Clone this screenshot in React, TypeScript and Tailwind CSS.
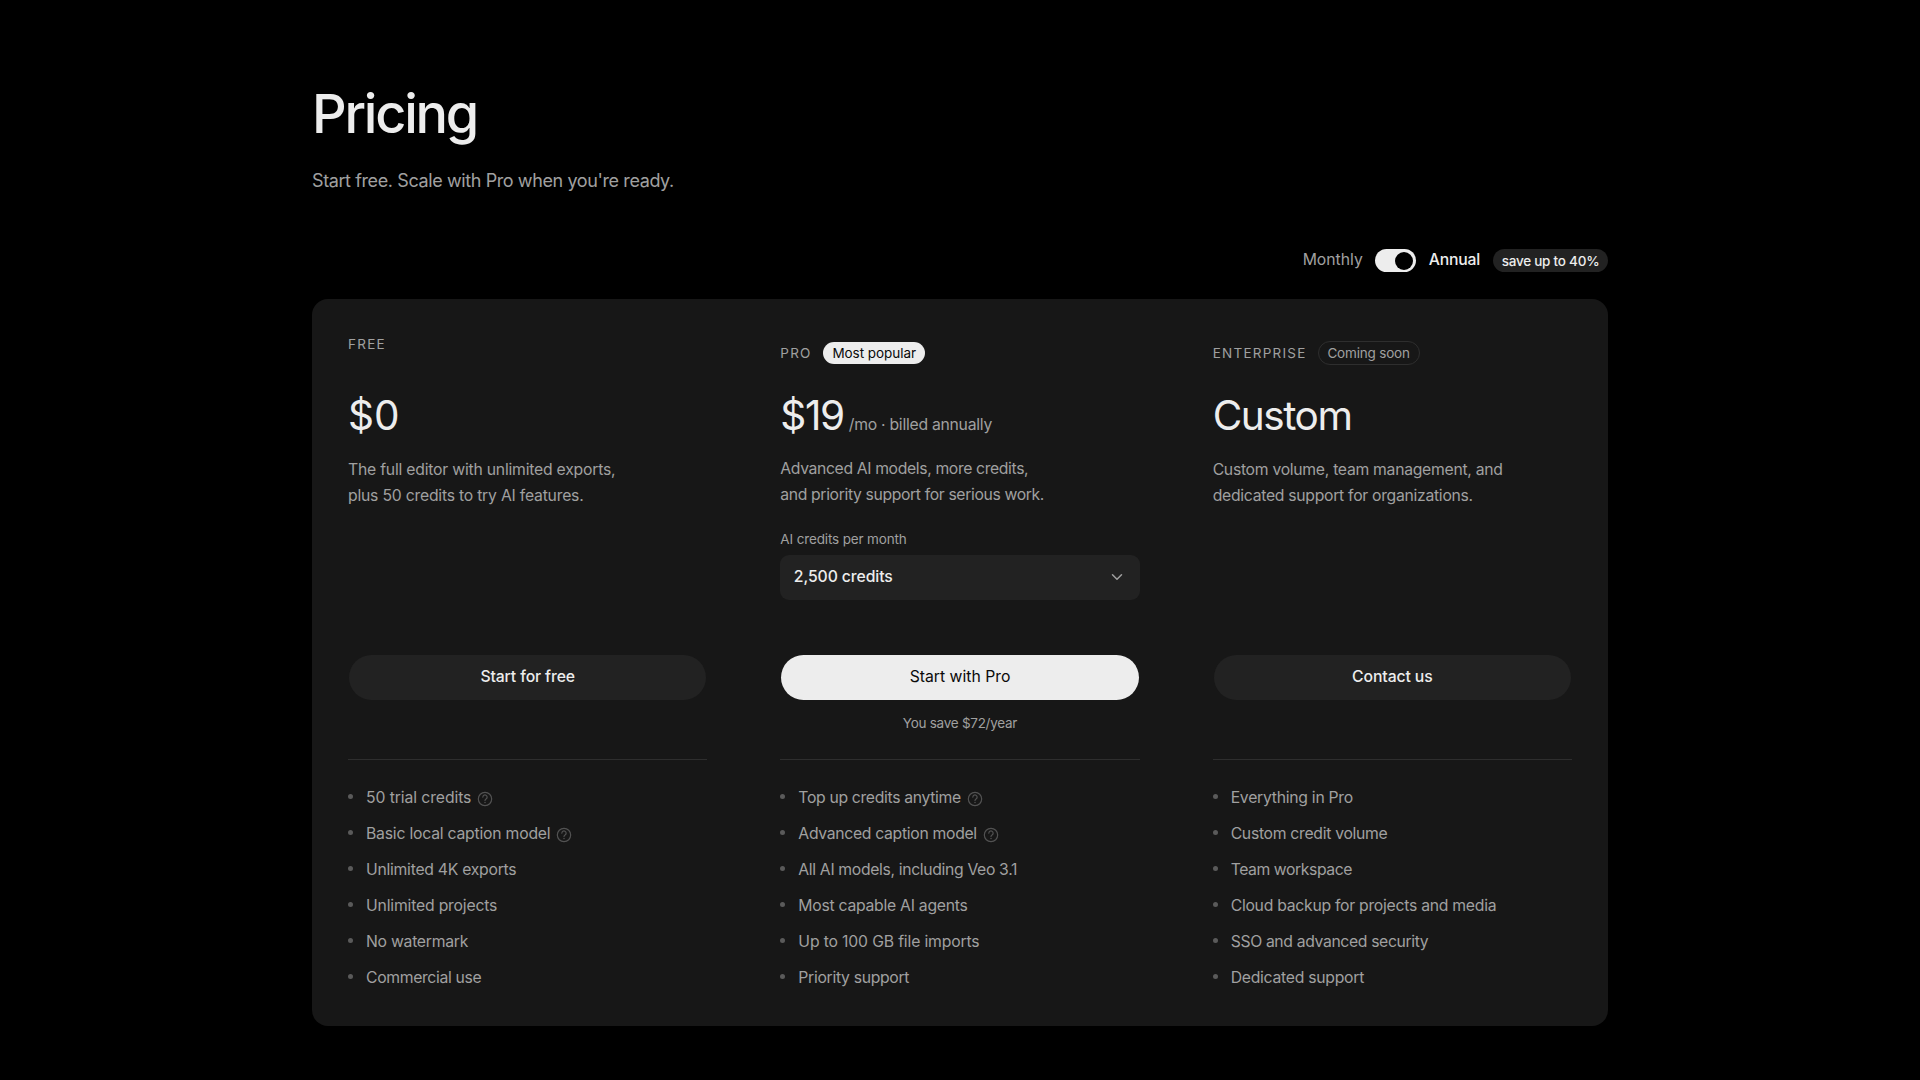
import { ChevronDown } from "lucide-react";
import { clsx } from "clsx";
import { useState } from "react";

interface Feature {
  label: string;
  tracking?: string;
  hasHelp?: boolean;
}

const freeFeatures: Feature[] = [
  { label: "50 trial credits", tracking: "tracking-[-0.006em]", hasHelp: true },
  { label: "Basic local caption model", tracking: "tracking-[-0.014em]", hasHelp: true },
  { label: "Unlimited 4K exports" },
  { label: "Unlimited projects", tracking: "tracking-[-0.012em]" },
  { label: "No watermark" },
  { label: "Commercial use", tracking: "tracking-[-0.022em]" },
];

const proFeatures: Feature[] = [
  { label: "Top up credits anytime", tracking: "tracking-[-0.021em]", hasHelp: true },
  { label: "Advanced caption model", tracking: "tracking-[-0.02em]", hasHelp: true },
  { label: "All AI models, including Veo 3.1", tracking: "tracking-[-0.022em]" },
  { label: "Most capable AI agents" },
  { label: "Up to 100 GB file imports", tracking: "tracking-[-0.01em]" },
  { label: "Priority support", tracking: "tracking-[-0.02em]" },
];

const enterpriseFeatures: Feature[] = [
  { label: "Everything in Pro" },
  { label: "Custom credit volume", tracking: "tracking-[-0.019em]" },
  { label: "Team workspace", tracking: "tracking-[-0.027em]" },
  { label: "Cloud backup for projects and media" },
  { label: "SSO and advanced security", tracking: "tracking-[-0.023em]" },
  { label: "Dedicated support" },
];

function HelpIcon() {
  return (
    <svg
      viewBox="0 0 24 24"
      fill="none"
      stroke="currentColor"
      strokeWidth={1.8}
      strokeLinecap="round"
      strokeLinejoin="round"
      className="mt-1 ml-1.5 size-4 shrink-0 text-[#525252]"
      aria-hidden="true"
    >
      <circle cx="12" cy="12" r="10" />
      <path d="M8.8 9.2a3.2 3.2 0 1 1 5 2.6c-1 .7-1.8 1.2-1.8 2.3" />
      <path d="M12 17.2v.1" strokeWidth={2.2} />
    </svg>
  );
}

function PlanName({ children }: { children: string }) {
  return (
    <h2 className="text-[13.5px] leading-[18px] tracking-[0.092em] text-[#a0a0a0] uppercase">
      {children}
    </h2>
  );
}

function PlanButton({
  label,
  isPrimary = false,
}: {
  label: string;
  isPrimary?: boolean;
}) {
  return (
    <button
      type="button"
      className={clsx(
        "mx-px flex h-[45px] shrink-0 items-center justify-center rounded-full pb-0.5 text-[15.75px] leading-[22px]",
        isPrimary
          ? "bg-[#ededed] text-[#0a0a0a]"
          : "bg-[#222222] font-medium tracking-[-0.007em] text-[#ededed]",
      )}
    >
      {label}
    </button>
  );
}

function FeatureList({ features }: { features: Feature[] }) {
  return (
    <ul className="flex flex-col gap-3 border-t border-[#2e2e2e] pt-[25px]">
      {features.map((feature) => (
        <li
          key={feature.label}
          className="flex h-6 items-center text-[15.75px] leading-[22px] text-[#a0a0a0]"
        >
          <span className="mr-[13px] mb-px size-[5px] shrink-0 rounded-full bg-[#5a5a5a]" />
          <span className={clsx("pt-0.5", feature.tracking ?? "tracking-[-0.017em]")}>
            {feature.label}
          </span>
          {feature.hasHelp && <HelpIcon />}
        </li>
      ))}
    </ul>
  );
}

export default function App() {
  const [isAnnual, setIsAnnual] = useState(true);

  return (
    <main className="min-h-screen bg-black pt-[87px] font-['Inter','Liberation_Sans',sans-serif] text-[#ededed]">
      <div className="mx-auto w-[1296px]">
        <h1 className="text-[54px] leading-[54px] font-medium tracking-[-0.041em]">
          Pricing
        </h1>
        <p className="mt-[26px] text-lg leading-[27px] tracking-[-0.022em] text-[#a0a0a0]">
          Start free. Scale with Pro when you're ready.
        </p>

        <div className="mt-[55px] mb-[27px] flex h-[23px] justify-end text-[15.75px] leading-[21px]">
          <span className="text-[#a0a0a0]">Monthly</span>
          <button
            type="button"
            role="switch"
            aria-checked={isAnnual}
            aria-label="Annual billing"
            onClick={() => setIsAnnual(!isAnnual)}
            className={clsx(
              "mr-[13px] ml-3 flex h-[23px] w-[41px] items-center rounded-full bg-[#ededed] px-[3px]",
              isAnnual ? "justify-end" : "justify-start",
            )}
          >
            <span className="size-[18px] rounded-full bg-black" />
          </button>
          <span className="font-medium tracking-[-0.014em]">Annual</span>
          <span className="ml-[13px] flex w-[115px] justify-center rounded-full bg-[#222222] text-[13.5px] leading-6 font-medium tracking-[-0.0177em]">
            save up to 40%
          </span>
        </div>

        <div className="grid grid-cols-3 gap-px rounded-2xl bg-[#171717]">
          <section className="flex flex-col px-9 pt-9 pb-[37px]">
            <div className="flex h-[320px] flex-col">
              <div className="flex h-9 items-start">
                <PlanName>Free</PlanName>
              </div>
              <div className="mt-[22px] text-[40.5px] leading-[45px]">$0</div>
              <p className="mt-[19px] text-[15.75px] leading-[26px] tracking-[-0.014em] text-[#a0a0a0]">
                The full editor with unlimited exports,
                <br />
                plus 50 credits to try AI features.
              </p>
            </div>
            <PlanButton label="Start for free" />
            <div className="h-[59px]" />
            <FeatureList features={freeFeatures} />
          </section>

          <section className="flex flex-col px-9 pt-9 pb-[37px]">
            <div className="flex h-[320px] flex-col">
              <div className="flex h-9 items-center gap-[11.5px]">
                <PlanName>Pro</PlanName>
                <span className="flex h-[22px] w-[102px] items-center justify-center rounded-full bg-[#ededed] text-[13.5px] leading-[18px] tracking-[-0.004em] text-[#0a0a0a]">
                  Most popular
                </span>
              </div>
              <div className="mt-[22px] flex items-baseline gap-[5px] text-[40.5px] leading-[45px] tracking-[-0.034em]">
                $19
                <span className="text-[15.75px] leading-[22px] tracking-[-0.017em] text-[#a0a0a0]">
                  /mo · billed annually
                </span>
              </div>
              <p className="mt-[18px] text-[15.75px] leading-[26px] tracking-[-0.0235em] text-[#a0a0a0]">
                Advanced AI models, more credits,
                <br />
                and priority support for serious work.
              </p>
              <span className="mt-[22px] text-[13.5px] leading-[18px] tracking-[-0.0107em] text-[#a0a0a0]">
                AI credits per month
              </span>
              <button
                type="button"
                className="mt-[7px] flex h-[45px] items-center justify-between rounded-[9px] bg-[#222222] pr-3.5 pb-0.5 pl-[13.5px] text-[15.75px] leading-[22px] font-medium tracking-[-0.006em]"
              >
                2,500 credits
                <ChevronDown
                  className="size-[18px] text-[#a0a0a0]"
                  aria-hidden="true"
                />
              </button>
            </div>
            <PlanButton label="Start with Pro" isPrimary />
            <p className="h-[59px] pt-3.5 text-center text-[13.5px] leading-[18px] tracking-[-0.02em] text-[#a0a0a0]">
              You save $72/year
            </p>
            <FeatureList features={proFeatures} />
          </section>

          <section className="flex flex-col px-9 pt-9 pb-[37px]">
            <div className="flex h-[320px] flex-col">
              <div className="flex h-9 items-center gap-[11px]">
                <PlanName>Enterprise</PlanName>
                <span className="flex h-6 w-[102px] items-center justify-center rounded-full border border-[#2e2e2e] text-[13.5px] leading-[18px] tracking-[-0.014em] text-[#a0a0a0]">
                  Coming soon
                </span>
              </div>
              <div className="mt-[22px] text-[40.5px] leading-[45px] tracking-[-0.036em]">
                Custom
              </div>
              <p className="mt-[19px] text-[15.75px] leading-[26px] tracking-[-0.0185em] text-[#a0a0a0]">
                Custom volume, team management, and
                <br />
                dedicated support for organizations.
              </p>
            </div>
            <PlanButton label="Contact us" />
            <div className="h-[59px]" />
            <FeatureList features={enterpriseFeatures} />
          </section>
        </div>
      </div>
    </main>
  );
}
